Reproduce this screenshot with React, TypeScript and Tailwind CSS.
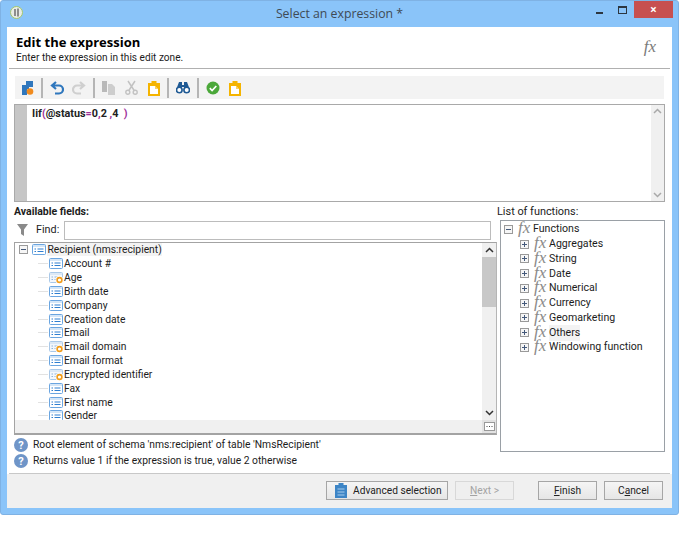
import React from 'react';

const fields = [
  { name: 'Account #' },
  { name: 'Age', calc: true },
  { name: 'Birth date' },
  { name: 'Company' },
  { name: 'Creation date' },
  { name: 'Email' },
  { name: 'Email domain', calc: true },
  { name: 'Email format' },
  { name: 'Encrypted identifier', calc: true },
  { name: 'Fax' },
  { name: 'First name' },
  { name: 'Gender' },
];

const functions = ['Aggregates', 'String', 'Date', 'Numerical', 'Currency', 'Geomarketing', 'Others', 'Windowing function'];

const FieldIcon = ({ calc }: { calc?: boolean }) => (
  <svg width="14" height="13" viewBox="0 0 14 13" className="shrink-0">
    <rect x="0.5" y="1.5" width="13" height="10" rx="1" fill={calc ? '#f3f7fc' : '#fff'} stroke={calc ? '#a9c8e8' : '#6aa5e0'} />
    <path d="M1 3h12" stroke={calc ? '#c4daf0' : '#a9cdf0'} />
    <path d="M2.500 6h1.500M5.500 6h6M2.500 8.500h1.500M5.500 8.500h6" stroke={calc ? '#8fb4dc' : '#2f7fd0'} />
    {calc && (
      <g>
        <circle cx="10.500" cy="9" r="4" fill="#fff" />
        <circle cx="10.500" cy="9" r="2.400" fill="none" stroke="#f19c1a" strokeWidth="1.600" />
      </g>
    )}
  </svg>
);

const Expander = ({ open }: { open?: boolean }) => (
  <svg width="9" height="9" viewBox="0 0 9 9" className="shrink-0">
    <rect x="0.500" y="0.500" width="8" height="8" fill="#f6f6f6" stroke="#9a9a9a" />
    <path d="M2 4.500h5" stroke="#44597a" />
    {!open && <path d="M4.500 2v5" stroke="#44597a" />}
  </svg>
);

const Fx = () => (
  <span className="mt-[-2px] ml-[5px] h-[14px] w-[15px] shrink-0 font-['Liberation_Serif',serif] text-[17px] leading-[14px] italic text-[#8a8a8a]">fx</span>
);

const Sep = () => <div className="mx-[7px] h-[20px] w-[2px] bg-[#b5b5b5]" />;

const Clipboard = ({ fill = '#f5b400' }: { fill?: string }) => (
  <svg width="12" height="16" viewBox="0 0 12 16">
    <path d="M0 3h3.500V1h5v2H12v13H0z" fill={fill} />
    <path d="M2 6h5l3 3v5H2z" fill="#fff" />
    <path d="M7 6l3 3H7z" fill={fill} opacity="0.6" />
  </svg>
);

const Toolbar = () => (
  <div className="mx-[8px] mt-[7px] flex h-[23px] items-center bg-[#f3f3f3] pl-[6px]">
    <svg width="13" height="16" viewBox="0 0 13 16">
      <path d="M5 1h7v6H8v2H1V5h4z" fill="#2f77bd" />
      <path d="M1 9h5v6H1z" fill="#2f77bd" />
      <circle cx="9" cy="11.500" r="3.300" fill="#f08a1d" />
    </svg>
    <Sep />
    <svg width="14" height="14" viewBox="0 0 14 14" className="mr-[8px]">
      <path d="M6 1L2 4.500 6 8M2.500 4.500H9a3.800 3.800 0 0 1 0 8H5" fill="none" stroke="#2f77bd" strokeWidth="2.200" />
    </svg>
    <svg width="14" height="14" viewBox="0 0 14 14">
      <path d="M8 1l4 3.500L8 8M11.500 4.500H5a3.800 3.800 0 0 0 0 8h4" fill="none" stroke="#cfcfcf" strokeWidth="2.200" />
    </svg>
    <Sep />
    <svg width="13" height="15" viewBox="0 0 13 15" className="mr-[10px]">
      <path d="M0 1h5v11H0z" fill="#b9b9b9" />
      <path d="M6 4h4l3 3v8H6z" fill="#cdcdcd" />
    </svg>
    <svg width="13" height="15" viewBox="0 0 13 15" className="mr-[10px]">
      <path d="M3 1l6.500 10M10 1L3.500 11" stroke="#c2c2c2" strokeWidth="1.500" />
      <circle cx="2.800" cy="12.300" r="2" fill="none" stroke="#c2c2c2" strokeWidth="1.400" />
      <circle cx="10.200" cy="12.300" r="2" fill="none" stroke="#c2c2c2" strokeWidth="1.400" />
    </svg>
    <Clipboard />
    <Sep />
    <svg width="14" height="13" viewBox="0 0 14 13">
      <path d="M3 1h3v3h2V1h3l3 8H8V6H6v3H0z" fill="#1f5a94" />
      <circle cx="3.300" cy="9" r="2.800" fill="#fff" stroke="#1f5a94" strokeWidth="1.600" />
      <circle cx="10.700" cy="9" r="2.800" fill="#fff" stroke="#1f5a94" strokeWidth="1.600" />
    </svg>
    <Sep />
    <svg width="14" height="14" viewBox="0 0 14 14" className="mr-[9px]">
      <circle cx="7" cy="7" r="6.500" fill="#4ba83a" />
      <path d="M3.800 7.200l2.300 2.300 4.200-4.500" fill="none" stroke="#fff" strokeWidth="1.700" />
    </svg>
    <Clipboard />
  </div>
);

const Btn = ({ children, disabled, w }: { children: React.ReactNode; disabled?: boolean; w: string }) => (
  <div
    className={`flex h-[19px] items-center justify-center border text-[10.200px] whitespace-nowrap ${w} ${
      disabled ? 'border-[#d8d8d8] bg-[#efefef] text-[#a3a3a3]' : 'border-[#a6a6a6] bg-gradient-to-b from-[#f5f5f5] to-[#e6e6e6] text-[#222]'
    }`}
  >
    {children}
  </div>
);

const Help = () => (
  <div className="flex h-[14px] w-[14px] shrink-0 items-center justify-center rounded-full bg-[#6f95c8] text-[11px] leading-none font-bold text-white">?</div>
);

export default function App() {
  return (
    <div className="h-[535px] w-[698px] bg-white font-['Roboto',sans-serif] text-[#1c1c1c]">
      <div className="flex h-[515px] w-[679px] flex-col rounded-[3px] border border-[#7fb2e4] bg-[#8ac4f9] px-[6px] pb-[6px]">
        {/* Title bar */}
        <div className="relative flex h-[26px] shrink-0 items-center justify-center font-['Open_Sans',sans-serif] text-[12.300px] text-[#3f4a55]">
          <svg width="13" height="13" viewBox="0 0 13 13" className="absolute top-[5px] left-[3px]">
            <circle cx="6.500" cy="6.500" r="6" fill="#e8ece6" stroke="#a5c76a" />
            <path d="M5 3v7M8 2.500v8" stroke="#777" strokeWidth="1.600" />
          </svg>
          Select an expression *
          <div className="absolute top-[11px] right-[69px] h-[2px] w-[7px] bg-[#2c3640]" />
          <div className="absolute top-[5px] right-[45px] h-[8px] w-[9px] border border-t-2 border-[#2c3640]" />
          <div className="absolute top-0 right-[-1px] flex h-[17px] w-[39px] items-center justify-center bg-[#c75050] text-[12px] font-bold text-white">×</div>
        </div>

        {/* Dialog body */}
        <div className="flex min-h-0 flex-1 flex-col bg-white">
          <div className="relative h-[41px] shrink-0 pl-[9px]">
            <div className="pt-[6px] font-['Open_Sans',sans-serif] text-[13px] leading-[18px] font-bold text-black">Edit the expression</div>
            <div className="text-[10.100px] leading-[14px]">Enter the expression in this edit zone.</div>
            <div className="absolute top-[11px] right-[16px] font-['Liberation_Serif',serif] text-[17px] leading-none italic text-[#7a7a7a]">fx</div>
          </div>
          <div className="mx-[2px] h-[1px] shrink-0 bg-[#b0b0b0]" />

          <Toolbar />

          {/* Editor */}
          <div className="mx-[7px] mt-[5px] flex h-[98px] shrink-0 border border-[#a9a9a9]">
            <div className="w-[12px] bg-[#c6c6c6]" />
            <div className="flex-1 pt-[1px] pl-[5px] text-[10.800px] leading-[15px] font-bold text-[#222]">
              Iif<span className="text-[#a0309a]">(</span>@status<span className="text-[#a0309a]">=</span>0<span className="text-[#a0309a]">,</span>2 <span className="text-[#a0309a]">,</span>4&nbsp; <span className="text-[#a0309a]">)</span>
            </div>
            <div className="flex w-[13px] flex-col items-center justify-between bg-[#f0f0f0] py-[3px] text-[#a9a9a9]">
              <svg width="9" height="6" viewBox="0 0 9 6"><path d="M1 5l3.500-3.500L8 5" fill="none" stroke="currentColor" strokeWidth="1.500" /></svg>
              <svg width="9" height="6" viewBox="0 0 9 6"><path d="M1 1l3.500 3.500L8 1" fill="none" stroke="currentColor" strokeWidth="1.500" /></svg>
            </div>
          </div>

          {/* Fields and functions */}
          <div className="mt-[2px] flex min-h-0 flex-1 pr-[7px] pl-[7px]">
            <div className="flex w-[483px] shrink-0 flex-col">
              <div className="h-[16px] text-[10.500px] leading-[15px] font-bold">Available fields:</div>
              <div className="flex h-[20px] shrink-0 items-center">
                <svg width="11" height="14" viewBox="0 0 11 14" className="ml-[3px]"><path d="M0 1h11L7 6.500V13L4 11V6.500z" fill="#8a8a8a" /></svg>
                <span className="ml-[8px] w-[24px] text-[10.800px]">Find:</span>
                <div className="mr-[6px] ml-[4px] h-[19px] flex-1 border border-[#bcbcbc]" />
              </div>

              <div className="mt-[2px] flex h-[193px] shrink-0 flex-col border border-b-2 border-[#a3a3a3] border-r-[#b5b5b5]">
                <div className="flex min-h-0 flex-1">
                  <div className="min-w-0 flex-1 overflow-hidden pl-[4px] text-[10.300px] leading-[13px]">
                    <div className="flex h-[13.830px] items-center">
                      <Expander open />
                      <span className="ml-[4px]"><FieldIcon /></span>
                      <span className="ml-[1px] bg-[#f3f3f3] px-[0.500px]">Recipient (nms:recipient)</span>
                    </div>
                    {fields.map((f) => (
                      <div key={f.name} className="flex h-[13.830px] items-center pl-[19px]">
                        <div className="mr-[1px] h-[1px] w-[10px] bg-[#e2e2e2]" />
                        <FieldIcon calc={f.calc} />
                        <span className="ml-[1px]">{f.name}</span>
                      </div>
                    ))}
                  </div>
                  <div className="flex w-[14px] shrink-0 flex-col items-center bg-[#f0f0f0] py-[4px]">
                    <svg width="9" height="6" viewBox="0 0 9 6"><path d="M1 5l3.500-3.500L8 5" fill="none" stroke="#333" strokeWidth="1.500" /></svg>
                    <div className="mt-[4px] h-[50px] w-full bg-[#c8c8c8]" />
                    <div className="flex-1" />
                    <svg width="9" height="6" viewBox="0 0 9 6"><path d="M1 1l3.500 3.500L8 1" fill="none" stroke="#333" strokeWidth="1.500" /></svg>
                  </div>
                </div>
                <div className="flex h-[13px] shrink-0 justify-end bg-[#f0f0f0]">
                  <div className="flex h-[13px] w-[14px] items-center justify-center bg-[#e2e2e2]">
                    <svg width="11" height="9" viewBox="0 0 11 9">
                      <rect x="0.500" y="0.500" width="10" height="8" fill="#fff" stroke="#999" />
                      <path d="M2.500 4.500h1M5 4.500h1M7.500 4.500h1" stroke="#444" />
                    </svg>
                  </div>
                </div>
              </div>

              <div className="mt-[3px] flex flex-col gap-[2px] text-[10.300px] leading-[14px]">
                <div className="flex h-[14px] items-center gap-[5px]"><Help />Root element of schema 'nms:recipient' of table 'NmsRecipient'</div>
                <div className="flex h-[14px] items-center gap-[5px]"><Help />Returns value 1 if the expression is true, value 2 otherwise</div>
              </div>
            </div>

            <div className="flex flex-1 flex-col">
              <div className="h-[16px] text-[10.900px] leading-[15px] text-[#222]">List of functions:</div>
              <div className="ml-[3px] flex h-[232px] flex-col border border-[#9aa0a6] pt-[1px] pl-[3px] text-[10.600px]">
                <div className="flex h-[14.750px] items-center">
                  <Expander open />
                  <Fx />
                  <span>Functions</span>
                </div>
                {functions.map((f) => (
                  <div key={f} className="flex h-[14.750px] items-center pl-[16px]">
                    <Expander />
                    <Fx />
                    <span className={f === 'Others' ? 'bg-[#f3f3f3]' : ''}>{f}</span>
                  </div>
                ))}
              </div>
            </div>
          </div>

          {/* Footer */}
          <div className="mx-[2px] mt-[4px] h-[1px] shrink-0 bg-[#c8c8c8]" />
          <div className="flex h-[34px] shrink-0 items-start bg-[#f0f0f0] pt-[7px] pr-[9px] pl-[319px]">
            <Btn w="w-[122px] !justify-start pl-[8px]">
              <svg width="12" height="15" viewBox="0 0 12 15" className="mr-[6px]">
                <path d="M0 2h3.500V0h5v2H12v13H0z" fill="#3d85c6" />
                <path d="M2.500 6h7M2.500 9h7M2.500 12h7" stroke="#a9cdec" />
              </svg>
              Advanced selection
            </Btn>
            <div className="ml-[7px]">
              <Btn w="w-[59px]" disabled><span><span className="underline">N</span>ext &gt;</span></Btn>
            </div>
            <div className="ml-[24px]">
              <Btn w="w-[59px]"><span><span className="underline">F</span>inish</span></Btn>
            </div>
            <div className="ml-[7px]">
              <Btn w="w-[59px]"><span>C<span className="underline">a</span>ncel</span></Btn>
            </div>
          </div>
        </div>
      </div>
    </div>
  );
}
